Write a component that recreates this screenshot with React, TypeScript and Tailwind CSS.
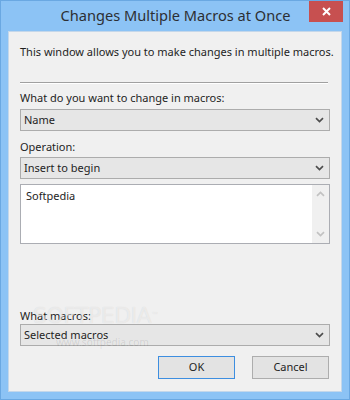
import { ReactNode } from "react"

const font = "font-['Noto_Sans',sans-serif]"

function Chevron({ up = false, color = "#4d4d4d" }: { up?: boolean; color?: string }) {
  return (
    <svg width="9" height="6" viewBox="0 0 9 6" className={up ? "rotate-180" : ""}>
      <path d="M1 1.2 L4.5 4.6 L8 1.2" stroke={color} strokeWidth="1.7" fill="none" />
    </svg>
  )
}

function Combo({ value }: { value: string }) {
  return (
    <div className="h-[22px] flex items-center justify-between pl-[3px] pr-[5px] bg-[#e6e6e6] border border-[#acacac] text-[11px] text-[#1e1e1e]">
      <span>{value}</span>
      <Chevron />
    </div>
  )
}

function Label({ children, className = "" }: { children: ReactNode; className?: string }) {
  return <div className={`h-[16px] leading-[16px] text-[11px] text-[#1e1e1e] ${className}`}>{children}</div>
}

function Button({ children, primary = false }: { children: ReactNode; primary?: boolean }) {
  return (
    <div
      className={`w-[77px] h-[23px] flex items-center justify-center text-[11px] text-[#1e1e1e] bg-[#e3e3e3] border ${
        primary ? "border-[#3d8ee0]" : "border-[#adadad]"
      }`}
    >
      {children}
    </div>
  )
}

export default function App() {
  return (
    <div className={`w-[350px] h-[400px] flex flex-col bg-[#8cc3f5] border border-[#6aa8e2] ${font}`}>
      {/* title bar */}
      <div className="relative h-[30px] flex items-center justify-center">
        <span className="text-[14.6px] text-[#2c2f33] pb-[1px] pl-[1px]">Changes Multiple Macros at Once</span>
        <div className="absolute top-0 right-[6px] w-[34px] h-[21px] bg-[#c75050] flex items-center justify-center">
          <svg width="9" height="9" viewBox="0 0 9 9">
            <path d="M1 1 L8 8 M8 1 L1 8" stroke="#fff" strokeWidth="2" />
          </svg>
        </div>
      </div>

      {/* client area */}
      <div className="relative flex-1 mx-[7px] mb-[7px] bg-[#f0f0f0] border border-[#c4d7ea] px-[11px] flex flex-col">
        <div className="mt-[12px] h-[16px] leading-[16px] text-[11px] text-[#1e1e1e] whitespace-nowrap">
          This window allows you to make changes in multiple macros.
        </div>
        <div className="mt-[22px] mr-[2px] border-t border-[#a0a0a0] border-b border-b-white" />

        <Label className="mt-[6px]">What do you want to change in macros:</Label>
        <div className="mt-[3px]">
          <Combo value="Name" />
        </div>

        <Label className="mt-[8px]">Operation:</Label>
        <div className="mt-[2px]">
          <Combo value="Insert to begin" />
        </div>

        <div className="mt-[5px] h-[60px] flex bg-white border border-[#abadb3]">
          <div className="flex-1 pl-[5px] pt-[3px] text-[11px] leading-[16px] text-[#1e1e1e]">Softpedia</div>
          <div className="w-[17px] bg-[#f0f0f0] flex flex-col items-center justify-between py-[6px]">
            <Chevron up color="#c2c2c2" />
            <Chevron color="#c2c2c2" />
          </div>
        </div>

        <Label className="mt-[64px]">What macros:</Label>
        <div>
          <Combo value="Selected macros" />
        </div>

        <div className="mt-[10px] flex justify-end gap-[17px] pr-[1px]">
          <Button primary>OK</Button>
          <Button>Cancel</Button>
        </div>

        {/* softpedia watermark */}
        <div className="absolute left-[24px] top-[271px] text-[22px] leading-[26px] tracking-[-0.5px] text-white/50 [text-shadow:0_0_1px_rgba(0,0,0,0.12)] font-['DejaVu_Sans',sans-serif] pointer-events-none">
          SOFTPEDIA<span className="text-[8px] align-top">™</span>
        </div>
        <div className="absolute left-[47px] top-[303px] text-[10px] leading-[14px] text-black/10 pointer-events-none">
          www.softpedia.com
        </div>
      </div>
    </div>
  )
}
